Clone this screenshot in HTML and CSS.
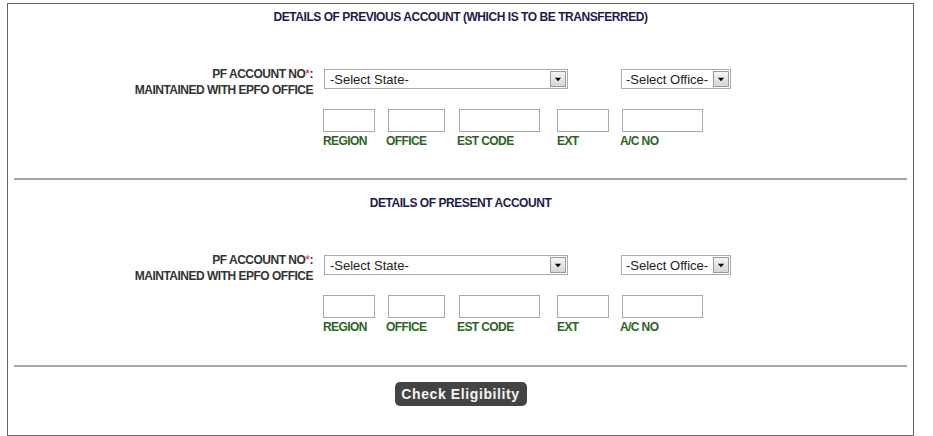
FILE: index.html
```html
<!DOCTYPE html>
<html lang="en">
<head>
  <meta charset="UTF-8" />
  <title>Transfer Claim - Account Details</title>
  <link rel="stylesheet" href="styles.css">
</head>
<body>

<div class="panel">

  <div class="section">
    <h3 class="section-title">DETAILS OF PREVIOUS ACCOUNT (WHICH IS TO BE TRANSFERRED)</h3>
    <div class="acct-row">
      <div class="acct-label">PF ACCOUNT NO<span class="req">*</span>:<br>MAINTAINED WITH EPFO OFFICE</div>
      <div class="acct-fields">
        <div class="sel-row">
          <span class="sel sel-state">
            <select id="prev_state"><option>-Select State-</option></select>
            <svg class="sel-arrow" width="16" height="16" viewBox="0 0 16 16"><path d="M4.5 6.5h7l-3.5 4z" fill="#000"/></svg>
          </span>
          <span class="sel sel-office">
            <select id="prev_office"><option>-Select Office-</option></select>
            <svg class="sel-arrow" width="16" height="16" viewBox="0 0 16 16"><path d="M4.5 6.5h7l-3.5 4z" fill="#000"/></svg>
          </span>
        </div>
        <div class="box-row">
          <div class="box-col c-region"><input type="text" class="box w-region"><span class="box-label">REGION</span></div>
          <div class="box-col c-office"><input type="text" class="box w-office"><span class="box-label shift">OFFICE</span></div>
          <div class="box-col c-est"><input type="text" class="box w-est"><span class="box-label shift">EST CODE</span></div>
          <div class="box-col c-ext"><input type="text" class="box w-ext"><span class="box-label">EXT</span></div>
          <div class="box-col c-acno"><input type="text" class="box w-acno"><span class="box-label shift">A/C NO</span></div>
        </div>
      </div>
    </div>
  </div>

  <hr class="sep">

  <div class="section section-next">
    <h3 class="section-title">DETAILS OF PRESENT ACCOUNT</h3>
    <div class="acct-row">
      <div class="acct-label">PF ACCOUNT NO<span class="req">*</span>:<br>MAINTAINED WITH EPFO OFFICE</div>
      <div class="acct-fields">
        <div class="sel-row">
          <span class="sel sel-state">
            <select id="pres_state"><option>-Select State-</option></select>
            <svg class="sel-arrow" width="16" height="16" viewBox="0 0 16 16"><path d="M4.5 6.5h7l-3.5 4z" fill="#000"/></svg>
          </span>
          <span class="sel sel-office">
            <select id="pres_office"><option>-Select Office-</option></select>
            <svg class="sel-arrow" width="16" height="16" viewBox="0 0 16 16"><path d="M4.5 6.5h7l-3.5 4z" fill="#000"/></svg>
          </span>
        </div>
        <div class="box-row">
          <div class="box-col c-region"><input type="text" class="box w-region"><span class="box-label">REGION</span></div>
          <div class="box-col c-office"><input type="text" class="box w-office"><span class="box-label shift">OFFICE</span></div>
          <div class="box-col c-est"><input type="text" class="box w-est"><span class="box-label shift">EST CODE</span></div>
          <div class="box-col c-ext"><input type="text" class="box w-ext"><span class="box-label">EXT</span></div>
          <div class="box-col c-acno"><input type="text" class="box w-acno"><span class="box-label shift">A/C NO</span></div>
        </div>
      </div>
    </div>
  </div>

  <hr class="sep sep-last">

  <div class="actions">
    <button type="button" class="btn-check">Check Eligibility</button>
  </div>

</div>

</body>
</html>
```

FILE: styles.css
```css
body { margin: 0; font-family: "Liberation Sans", Arial, sans-serif; background: #fff; }

.panel {
  margin: 3px 0 0 7px;
  width: 905px;
  height: 426px;
  border: 1px solid #666;
  padding-top: 5px;
  box-sizing: content-box;
}

.section-title {
  margin: 0;
  text-align: center;
  font-size: 12px;
  letter-spacing: -0.45px;
  line-height: 16px;
  font-weight: bold;
  color: #1c1c4c;
}
.section-next { margin-top: 15px; }

.acct-row { display: flex; margin-top: 41px; }
.acct-label {
  width: 305px;
  text-align: right;
  font-size: 12px;
  letter-spacing: -0.5px;
  line-height: 16px;
  font-weight: bold;
  color: #333;
}
.req { color: #e0201a; font-weight: normal; }
.acct-fields { margin-left: 10px; }

.sel-row { display: flex; margin-top: 3px; }
.sel { position: relative; display: inline-block; height: 20px; }
.sel select {
  -webkit-appearance: none;
  appearance: none;
  width: 100%;
  height: 20px;
  margin: 0;
  padding: 0 0 0 5px;
  border: 1px solid #a5acb2;
  border-radius: 0;
  background: #fff;
  font-family: "Liberation Sans", Arial, sans-serif;
  font-size: 13px;
  color: #222;
}
.sel-state { width: 244px; margin-left: 1px; }
.sel-office { width: 110px; margin-left: 53px; }
.sel-office select { padding-left: 4px; }
.sel-arrow {
  position: absolute;
  right: 2px;
  top: 2px;
  width: 16px;
  height: 16px;
  box-sizing: border-box;
  border: 1px solid #9a9a9a;
  background: linear-gradient(#f4f4f4, #d6d6d6);
  pointer-events: none;
}

.box-row { display: flex; margin-top: 20px; }
.box-col { display: flex; flex-direction: column; }
.c-region { width: 65px; }
.c-office { width: 71px; }
.c-est { width: 98px; }
.c-ext { width: 65px; }
.c-acno { width: 81px; }
.box {
  height: 23px;
  margin: 0;
  padding: 0 3px;
  box-sizing: border-box;
  border: 1px solid #a9a9a9;
  font-size: 12px;
}
.w-region { width: 52px; }
.w-office { width: 57px; }
.w-est { width: 81px; }
.w-ext { width: 52px; }
.w-acno { width: 81px; }
.box-label {
  margin-top: 2px;
  font-size: 12px;
  letter-spacing: -0.6px;
  line-height: 14px;
  font-weight: bold;
  color: #2a661c;
}
.box-label.shift { margin-left: -2px; }

.sep {
  margin: 30px 6px 0 6px;
  height: 0;
  border: none;
  border-top: 2px solid #a6a6a6;
}
.sep-last { margin-top: 31px; }

.actions { text-align: center; margin-top: 15px; }
.btn-check {
  width: 132px;
  height: 24px;
  padding: 0;
  border: none;
  border-radius: 5px;
  background: #444;
  color: #f4f4f4;
  font-family: "Liberation Sans", Arial, sans-serif;
  font-size: 14px;
  font-weight: bold;
  letter-spacing: 0.6px;
  cursor: pointer;
}
```
